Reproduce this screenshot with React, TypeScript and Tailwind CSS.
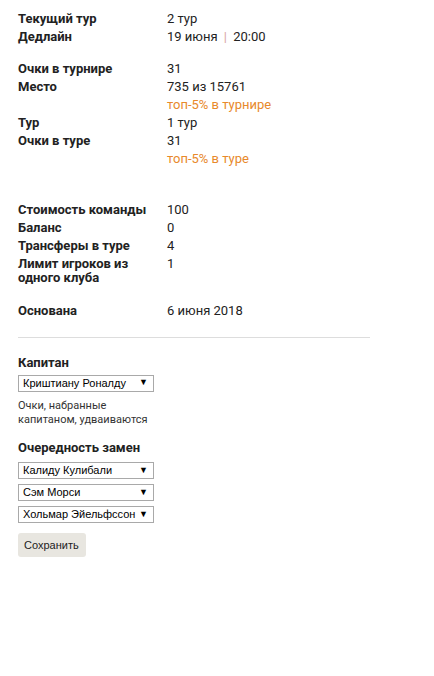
import React from 'react';

const Row = ({ label, children, labelClass = '' }: { label: string; children: React.ReactNode; labelClass?: string }) => (
  <div className="flex leading-[18px]">
    <div className={`w-[149px] shrink-0 pr-3 font-bold ${labelClass}`}>{label}</div>
    <div>{children}</div>
  </div>
);

const Orange = ({ children }: { children: React.ReactNode }) => (
  <div className="text-[#e8892b]">{children}</div>
);

const Select = ({ value }: { value: string }) => (
  <div className="w-[136px] h-[17px] border border-[#a9a9a9] bg-white flex items-center justify-between pl-[4px] pr-[5px] text-[11px] text-black font-['Liberation_Sans',Arial,sans-serif]">
    <span className="whitespace-nowrap">{value}</span>
    <span className="text-[9px]">▼</span>
  </div>
);

export default function App() {
  return (
    <div className="min-h-screen bg-white text-[#222] text-[13px] font-['Roboto','Liberation_Sans',sans-serif] px-[18px] pt-[10px]">
      <div className="w-[352px]">
        <Row label="Текущий тур">2 тур</Row>
        <Row label="Дедлайн">
          19 июня <span className="text-[#d9a3a3] mx-[3px]">|</span> 20:00
        </Row>

        <div className="mt-[14px]">
          <Row label="Очки в турнире">31</Row>
          <Row label="Место">
            735 из 15761
            <Orange>топ-5% в турнире</Orange>
          </Row>
          <Row label="Тур">1 тур</Row>
          <Row label="Очки в туре">
            31
            <Orange>топ-5% в туре</Orange>
          </Row>
        </div>

        <div className="mt-[33px]">
          <Row label="Стоимость команды">100</Row>
          <Row label="Баланс">0</Row>
          <Row label="Трансферы в туре">4</Row>
          <Row label="Лимит игроков из одного клуба" labelClass="leading-[14px] pt-[2px]">1</Row>
        </div>

        <div className="mt-[17px]">
          <Row label="Основана">6 июня 2018</Row>
        </div>

        <div className="mt-[17px] border-t border-[#dddddd]" />

        <div className="mt-[15px] font-bold">Капитан</div>
        <div className="mt-[2px]">
          <Select value="Криштиану Роналду" />
        </div>
        <div className="mt-[7px] w-[140px] text-[11px] leading-[14px] text-[#333]">
          Очки, набранные капитаном, удваиваются
        </div>

        <div className="mt-[11px] font-bold">Очередность замен</div>
        <div className="mt-[5px] flex flex-col gap-[5px]">
          <Select value="Калиду Кулибали" />
          <Select value="Сэм Морси" />
          <Select value="Хольмар Эйельфссон" />
        </div>

        <button className="mt-[10px] h-[24px] pl-[6px] pr-[7px] rounded-[3px] bg-[#e8e6e0] text-[11px] text-[#222] font-['Liberation_Sans',Arial,sans-serif]">
          Сохранить
        </button>
      </div>
    </div>
  );
}
